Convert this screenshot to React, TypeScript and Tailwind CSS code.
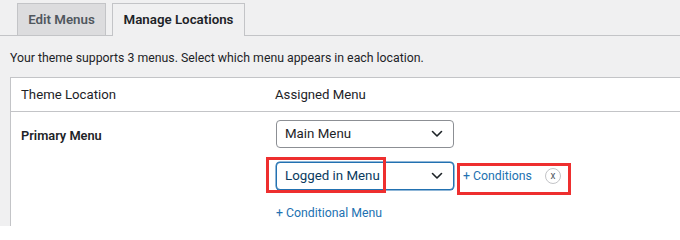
import React from "react";

const Chevron = () => (
  <svg width="12" height="8" viewBox="0 0 12 8" fill="none" className="shrink-0">
    <path d="M1.5 1.5L6 6L10.5 1.5" stroke="#1d2327" strokeWidth="1.6" strokeLinecap="round" strokeLinejoin="round" />
  </svg>
);

const App = () => {
  return (
    <div
      className="relative w-[680px] h-[226px] overflow-hidden bg-[#f0f0f1] text-[#1d2327]"
      style={{ fontFamily: "Roboto, 'Liberation Sans', sans-serif" }}
    >
      {/* Tabs */}
      <div className="flex items-end pt-[3px] pl-[17px] gap-[6px] border-b border-[#c3c4c7] h-[36px]">
        <div className="h-[32px] w-[89px] flex items-center justify-center bg-[#dcdcde] border border-b-0 border-[#c3c4c7] text-[13.3px] font-semibold text-[#50575e]">
          Edit Menus
        </div>
        <div className="h-[33px] w-[133px] -mb-px flex items-center justify-center bg-[#f0f0f1] border border-b-0 border-[#c3c4c7] text-[13.3px] font-semibold text-[#1d2327]">
          Manage Locations
        </div>
      </div>

      {/* Description */}
      <p className="pl-[10px] pt-[13px] h-[41px] text-[12.3px] leading-[18px] text-[#1d2327]">
        Your theme supports 3 menus. Select which menu appears in each location.
      </p>

      {/* Table */}
      <div className="ml-[10px] bg-white border-l border-t border-[#c3c4c7]">
        <div className="flex h-[34px] items-center border-b border-[#c3c4c7] text-[13.2px]">
          <div className="w-[254px] pl-[10px]">Theme Location</div>
          <div className="pl-[10px]">Assigned Menu</div>
        </div>
        <div className="flex h-[120px]">
          <div className="w-[254px] pl-[10px] pt-[15px] text-[12.8px] font-semibold leading-[18px]">Primary Menu</div>
          <div className="pl-[11px] pt-[8px] flex flex-col">
            <div className="w-[178px] h-[28px] flex items-center justify-between pl-[8px] pr-[10px] border border-[#8c8f94] rounded-[4px] text-[13.3px] bg-white">
              <span>Main Menu</span>
              <Chevron />
            </div>
            <div className="flex items-center mt-[14px]">
              <div className="w-[178px] h-[28px] flex items-center justify-between pl-[8px] pr-[10px] border border-[#2271b1] rounded-[4px] text-[13.3px] text-[#0a3a5e] bg-white shadow-[0_0_0_0.5px_#2271b1]">
                <span>Logged in Menu</span>
                <Chevron />
              </div>
              <span className="ml-[9px] text-[12.3px] text-[#2271b1]">+ Conditions</span>
              <span className="ml-[13px] w-[16px] h-[16px] rounded-full border border-[#c3c4c7] flex items-center justify-center text-[10px] leading-none text-[#50575e] pb-[1px]">
                x
              </span>
            </div>
            <span className="mt-[14px] text-[12.3px] text-[#2271b1]">+ Conditional Menu</span>
          </div>
        </div>
      </div>

      {/* Annotation boxes */}
      <div className="absolute left-[266px] top-[157px] w-[120px] h-[36px] border-[3px] border-[#ee2f2f]" />
      <div className="absolute left-[457px] top-[163px] w-[114px] h-[32px] border-[3px] border-[#ee2f2f]" />
    </div>
  );
};

export default App;
